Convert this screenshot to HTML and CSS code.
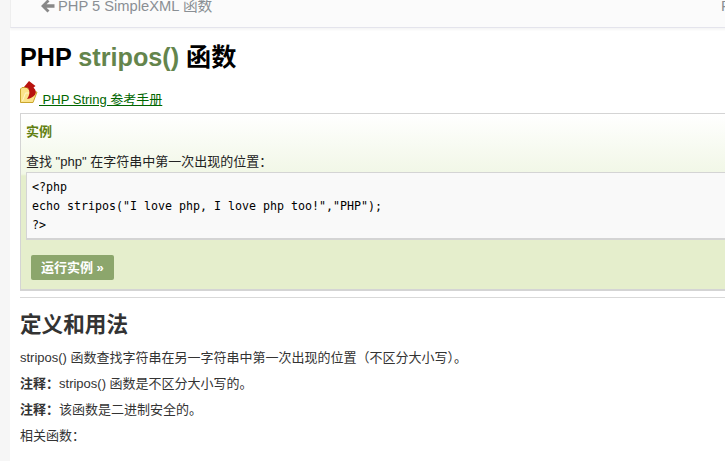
FILE: index.html
```html
<!DOCTYPE html>
<html lang="zh-CN">
<head>
    <meta charset="UTF-8">
    <meta name="viewport" content="width=device-width, initial-scale=1.0">
    <title>PHP stripos() 函数</title>
    <link rel="stylesheet" href="styles.css">
</head>
<body>
    <div class="article">
        <div class="nav-top">
            <a class="nav-prev" href="#">
                <svg class="nav-arrow" viewBox="0 0 14 14"><path d="M6.500 .5 L0 7 L6.500 13.500 L8.500 11.500 L5.500 8.800 L13.500 8.800 L13.500 5.200 L5.500 5.200 L8.500 2.500 Z"/></svg>
                PHP 5 SimpleXML 函数
            </a>
            <a class="nav-next" href="#">PHP 5 Math 函数</a>
        </div>
        <div class="content">
            <h1>PHP <span class="title-green">stripos()</span> 函数</h1>
            <p class="ref-line">
                <a class="ref-link" href="#">
                    <svg class="ref-icon" viewBox="0 0 19 24">
                        <path d="M.5 9 L2 7.500 L7 7.500 L8 9 L13 9 L13 12 L17 12 L13 22.500 L.5 22.500 Z" fill="#fbe38a" stroke="#c9a52c"/>
                        <path d="M2.500 21 L5.500 13 L14 13" fill="none" stroke="#fff6c8"/>
                        <path d="M9 1 L4 7 L8 8 C10 11 10 15 7 19 C14 18 19 13 13.500 7.500 L15.500 6 Z" fill="#b8130f"/>
                    </svg> PHP String 参考手册</a>
            </p>
            <div class="example">
                <h2 class="example-title">实例</h2>
                <p class="example-desc">查找 "php" 在字符串中第一次出现的位置：</p>
                <pre class="example-code">&lt;?php
echo stripos("I love php, I love php too!","PHP");
?&gt;</pre>
                <a class="try-btn" href="#">运行实例 »</a>
            </div>
            <hr class="divider">
            <h2 class="section-title">定义和用法</h2>
            <p class="text">stripos() 函数查找字符串在另一字符串中第一次出现的位置（不区分大小写）。</p>
            <p class="text"><b>注释：</b>stripos() 函数是不区分大小写的。</p>
            <p class="text"><b>注释：</b>该函数是二进制安全的。</p>
            <p class="text">相关函数：</p>
        </div>
    </div>
</body>
</html>
```

FILE: styles.css
```css
html, body {
    height: 100%;
    overflow: hidden;
}
body {
    margin: 0;
    background-color: #f6f6f6;
    font-family: "Liberation Sans", Arial, "Noto Sans CJK SC", sans-serif;
    font-size: 13px;
    color: #333;
}
.article {
    width: 900px;
    min-height: 100%;
    margin-left: 10px;
    background-color: #fff;
}

/* top navigation */
.nav-top {
    display: flex;
    height: 27px;
    padding-left: 30px;
    background-color: #fbfbfb;
    border-left: 1px solid #eee;
    border-bottom: 1px solid #e4e4ec;
    box-shadow: 0 2px 2px #f6f6f6;
    font-size: 14.7px;
    line-height: 12px;
}
.nav-top a {
    color: #8a8f94;
    text-decoration: none;
    white-space: nowrap;
}
.nav-prev {
    display: flex;
    flex: none;
    align-items: center;
    gap: 3px;
    width: 680px;
    height: 12px;
}
.nav-arrow {
    width: 14px;
    height: 14px;
    fill: #888;
}

.content {
    padding: 0 10px;
}
h1 {
    margin: 0;
    padding-top: 12px;
    font-size: 25.2px;
    line-height: 34px;
    color: #000;
}
.title-green {
    color: #64854c;
}
.ref-line {
    margin: 6px 0 0;
    height: 27px;
}
.ref-link {
    color: #006600;
    text-decoration: underline;
}
.ref-icon {
    width: 19px;
    height: 24px;
    vertical-align: 0;
}

/* example box */
.example {
    margin-top: 6px;
    padding: 0 5px;
    height: 175px;
    border: 1px solid #d4d4d4;
    border-width: 1px 2px 2px 1px;
    background: linear-gradient(#fff 0, #f1f7e6 60px, #e5eecc 62px);
    color: #000;
}
.example-title {
    margin: 0;
    padding-top: 9px;
    font-size: 13px;
    line-height: 17px;
    color: #617f10;
}
.example-desc {
    margin: 13px 0 0;
    line-height: 17px;
    color: #222;
}
.example-code {
    margin: 2px 0 0;
    padding: 5px 5px 3px;
    height: 57px;
    line-height: 19px;
    background-color: #f9f9f9;
    border: 1px solid #d4d4d4;
    border-width: 1px 0 2px 1px;
    font-family: "DejaVu Sans Mono", "Liberation Mono", monospace;
    font-size: 11.63px;
    color: #000;
}
.try-btn {
    display: inline-block;
    margin: 15px 0 0 5px;
    padding: 0 10px;
    height: 25px;
    line-height: 25px;
    border-radius: 2px;
    background-color: #8ca66c;
    color: #fff;
    font-weight: bold;
    text-decoration: none;
}

.divider {
    margin: 6px 0 0;
    height: 0;
    border: 0;
    border-top: 1px solid #d9d9d9;
}
.section-title {
    margin: 12px 0 0;
    font-size: 21.6px;
    line-height: 30px;
    color: #333;
}
.text {
    margin: 11px 0 0;
    line-height: 15px;
}
.section-title + .text {
    margin-top: 10px;
}
```
